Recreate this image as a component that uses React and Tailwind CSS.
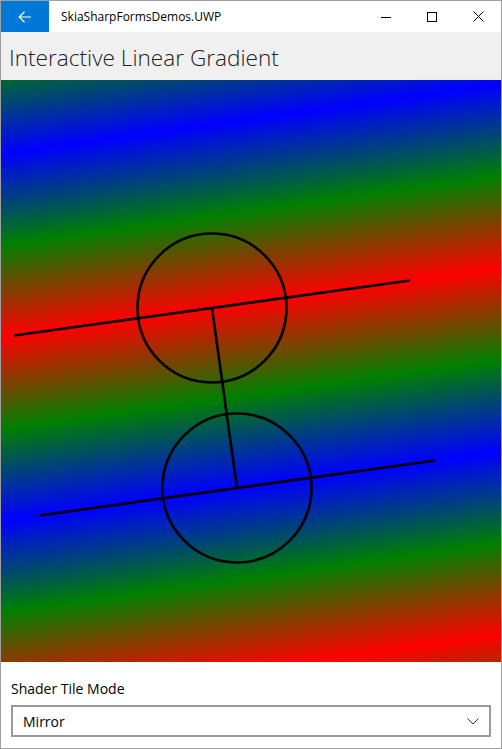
import React from "react";

const font = "font-['Segoe_UI','Open_Sans','Noto_Sans',sans-serif]";

const TitleBar = () => {
  return (
    <div className="flex h-[31px] items-center bg-white">
      <div className="flex h-full w-[48px] items-center justify-center bg-[#0078d7]">
        <svg width="14" height="12" viewBox="0 0 14 12" fill="none" stroke="white" strokeWidth="1.2">
          <path d="M13 6H1.5M6.5 0.8L1.2 6l5.3 5.2" />
        </svg>
      </div>
      <div className="pl-[12px] text-[12px] text-black">SkiaSharpFormsDemos.UWP</div>
      <div className="flex-1" />
      <div className="flex h-full">
        <div className="flex w-[46px] items-center justify-center">
          <svg width="10" height="10" viewBox="0 0 10 10">
            <path d="M0 5.5h10" stroke="black" strokeWidth="1" />
          </svg>
        </div>
        <div className="flex w-[46px] items-center justify-center">
          <svg width="10" height="10" viewBox="0 0 10 10" fill="none">
            <rect x="0.5" y="0.5" width="9" height="9" stroke="black" strokeWidth="1" />
          </svg>
        </div>
        <div className="flex w-[46px] items-center justify-center">
          <svg width="11" height="11" viewBox="0 0 11 11">
            <path d="M0.5 0.5l10 10M10.5 0.5l-10 10" stroke="black" strokeWidth="1" />
          </svg>
        </div>
      </div>
    </div>
  );
};

// canvas drawn in page coordinates (viewBox offset), mirror tile mode
const GradientCanvas = () => {
  const p0 = { x: 212, y: 308 };
  const p1 = { x: 237, y: 488 };
  return (
    <svg width="500" height="582" viewBox="1 80 500 582" className="block">
      <defs>
        <linearGradient
          id="grad"
          gradientUnits="userSpaceOnUse"
          spreadMethod="reflect"
          x1={p0.x}
          y1={p0.y}
          x2={p1.x}
          y2={p1.y}
        >
          <stop offset="0" stopColor="#ff0000" />
          <stop offset="0.5" stopColor="#008000" />
          <stop offset="1" stopColor="#0000ff" />
        </linearGradient>
      </defs>
      <rect x="1" y="80" width="500" height="582" fill="url(#grad)" />
      <g stroke="black" strokeWidth="2.6" fill="none">
        <circle cx={p0.x} cy={p0.y} r="74.5" />
        <circle cx={p1.x} cy={p1.y} r="74.5" />
        <line x1="14" y1="335.5" x2="410" y2="280.5" />
        <line x1="39" y1="515.5" x2="435" y2="460.5" />
        <line x1={p0.x} y1={p0.y} x2={p1.x} y2={p1.y} />
      </g>
    </svg>
  );
};

const App = () => {
  return (
    <div className={`flex h-[749px] w-[502px] flex-col border border-[#a0a0a0] bg-white ${font}`}>
      <TitleBar />
      <div className="flex h-[48px] items-center bg-[#f0f0f0] px-[8px] pt-[3px] text-[22.6px] font-light text-[#222]">
        Interactive Linear Gradient
      </div>
      <GradientCanvas />
      <div className="flex flex-1 flex-col px-[10px] pt-[17px]">
        <div className="h-[26px] text-[14px] leading-[20px] text-black">Shader Tile Mode</div>
        <div className="flex h-[32px] w-[480px] items-center justify-between border-2 border-[#999] px-[10px] text-[14px] text-black">
          <span>Mirror</span>
          <svg width="12" height="7" viewBox="0 0 12 7" fill="none" stroke="#333" strokeWidth="1">
            <path d="M0.5 0.5l5.5 5.5 5.5-5.5" />
          </svg>
        </div>
      </div>
    </div>
  );
};

export default App;
